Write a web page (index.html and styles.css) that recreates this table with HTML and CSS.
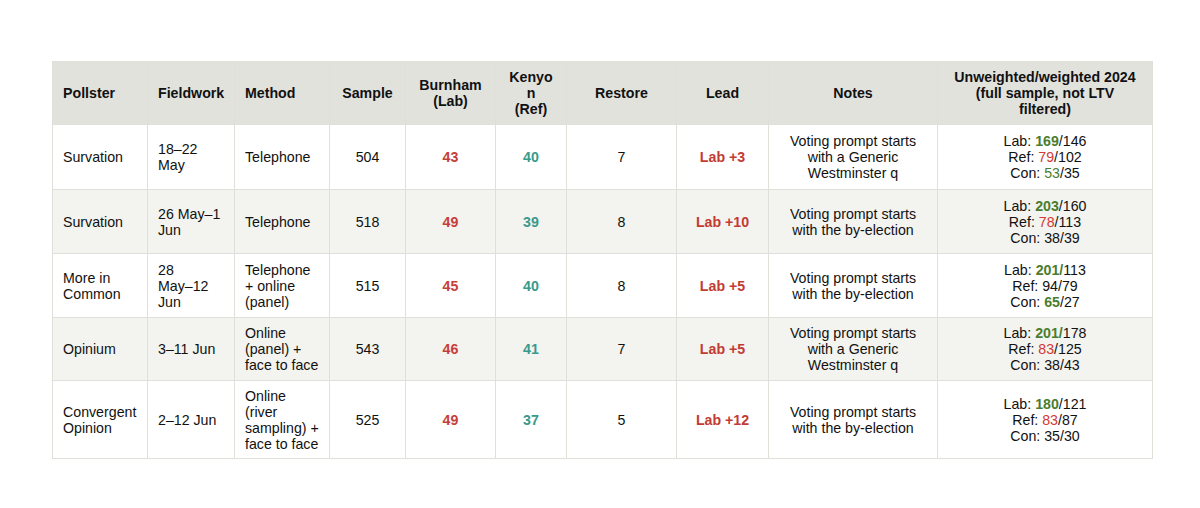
FILE: index.html
```html
<!DOCTYPE html>
<html lang="en">
<head>
<meta charset="utf-8">
<title>Polls</title>
<link rel="stylesheet" href="styles.css">
</head>
<body>
<table class="polls">
  <colgroup>
    <col class="c-pollster"><col class="c-field"><col class="c-method"><col class="c-sample"><col class="c-burn"><col class="c-ken"><col class="c-rest"><col class="c-lead"><col class="c-notes"><col class="c-unw">
  </colgroup>
  <thead>
    <tr class="h-head">
      <th class="left">Pollster</th>
      <th class="left">Fieldwork</th>
      <th class="left">Method</th>
      <th>Sample</th>
      <th>Burnham<br>(Lab)</th>
      <th>Kenyo<br>n<br>(Ref)</th>
      <th>Restore</th>
      <th>Lead</th>
      <th>Notes</th>
      <th>Unweighted/weighted 2024<br>(full sample, not LTV<br>filtered)</th>
    </tr>
  </thead>
  <tbody>
    <tr class="h-65">
      <td class="left">Survation</td>
      <td class="left">18–22<br>May</td>
      <td class="left">Telephone</td>
      <td>504</td>
      <td class="lab">43</td>
      <td class="ref">40</td>
      <td>7</td>
      <td class="lead">Lab +3</td>
      <td>Voting prompt starts<br>with a Generic<br>Westminster q</td>
      <td>Lab: <b class="g">169</b>/146<br>Ref: <span class="r">79</span>/102<br>Con: <span class="g">53</span>/35</td>
    </tr>
    <tr class="h-64">
      <td class="left">Survation</td>
      <td class="left">26 May–1<br>Jun</td>
      <td class="left">Telephone</td>
      <td>518</td>
      <td class="lab">49</td>
      <td class="ref">39</td>
      <td>8</td>
      <td class="lead">Lab +10</td>
      <td>Voting prompt starts<br>with the by-election</td>
      <td>Lab: <b class="g">203</b>/160<br>Ref: <span class="r">78</span>/113<br>Con: 38/39</td>
    </tr>
    <tr class="h-64">
      <td class="left">More in<br>Common</td>
      <td class="left">28<br>May–12<br>Jun</td>
      <td class="left">Telephone<br>+ online<br>(panel)</td>
      <td>515</td>
      <td class="lab">45</td>
      <td class="ref">40</td>
      <td>8</td>
      <td class="lead">Lab +5</td>
      <td>Voting prompt starts<br>with the by-election</td>
      <td>Lab: <b class="g">201/</b>113<br>Ref: 94/79<br>Con: <b class="g">65</b>/27</td>
    </tr>
    <tr class="h-63">
      <td class="left">Opinium</td>
      <td class="left">3–11 Jun</td>
      <td class="left">Online<br>(panel) +<br>face to face</td>
      <td>543</td>
      <td class="lab">46</td>
      <td class="ref">41</td>
      <td>7</td>
      <td class="lead">Lab +5</td>
      <td>Voting prompt starts<br>with a Generic<br>Westminster q</td>
      <td>Lab: <b class="g">201/</b>178<br>Ref: <span class="r">83</span>/125<br>Con: 38/43</td>
    </tr>
    <tr class="h-78">
      <td class="left">Convergent<br>Opinion</td>
      <td class="left">2–12 Jun</td>
      <td class="left">Online<br>(river<br>sampling) +<br>face to face</td>
      <td>525</td>
      <td class="lab">49</td>
      <td class="ref">37</td>
      <td>5</td>
      <td class="lead">Lab +12</td>
      <td>Voting prompt starts<br>with the by-election</td>
      <td>Lab: <b class="g">180</b>/121<br>Ref: <span class="r">83</span>/87<br>Con: 35/30</td>
    </tr>
  </tbody>
</table>
</body>
</html>
```
FILE: styles.css
```css
html, body {
  margin: 0;
  padding: 0;
  background: #ffffff;
}
body {
  padding: 61px 0 0 52px;
  font-family: "Liberation Sans", Arial, sans-serif;
  font-size: 14.2px;
  color: #111111;
}
.polls {
  border-collapse: collapse;
  table-layout: fixed;
  width: 1100px;
}
.c-pollster { width: 95px; }
.c-field { width: 87px; }
.c-method { width: 95px; }
.c-sample { width: 76px; }
.c-burn { width: 90px; }
.c-ken { width: 71px; }
.c-rest { width: 110px; }
.c-lead { width: 92px; }
.c-notes { width: 169px; }
.c-unw { width: 215px; }
.h-head { height: 63px; }
.h-65 { height: 65px; }
.h-64 { height: 64px; }
.h-63 { height: 63px; }
.h-78 { height: 78px; }
.polls th,
.polls td {
  border: 1px solid #e0e0da;
  padding: 6px 10px;
  line-height: 16px;
  text-align: center;
  vertical-align: middle;
}
.polls th {
  background: #e2e2dd;
  font-weight: bold;
  color: #111111;
}
.polls tbody tr:nth-child(even) td {
  background: #f3f3ef;
}
.polls .left {
  text-align: left;
}
.lab {
  color: #c73e38;
  font-weight: bold;
}
.ref {
  color: #3a9a8a;
  font-weight: bold;
}
.lead {
  color: #c23b35;
  font-weight: bold;
}
.g {
  color: #4a7d2e;
}
b.g {
  font-weight: bold;
}
.r {
  color: #d23a35;
}
```
